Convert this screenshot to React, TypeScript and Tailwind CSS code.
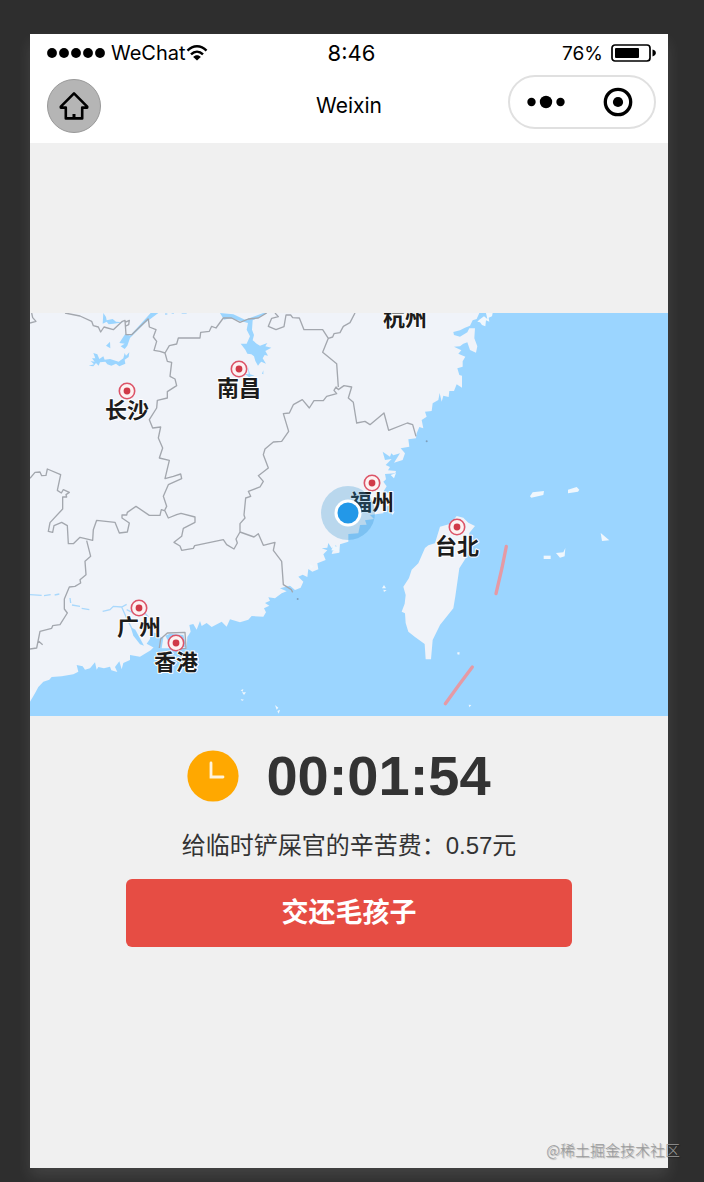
interface City {
  name: string
  x: number
  y: number
  pin?: boolean
}

const cities: City[] = [
  { name: '长沙', x: 97, y: 78, pin: true },
  { name: '南昌', x: 209, y: 56, pin: true },
  { name: '杭州', x: 375, y: -14 },
  { name: '福州', x: 342, y: 170, pin: true },
  { name: '台北', x: 427, y: 214, pin: true },
  { name: '广州', x: 109, y: 295, pin: true },
  { name: '香港', x: 146, y: 330, pin: true },
]

// Outlines are drawn on a 1914 x 1209 grid, three units per map pixel
const mainland =
  '0,0 1348,0 1340,18 1328,22 1320,38 1305,44 1290,52 1270,57 1272,66 1290,71 1312,58 1318,46 1335,46 1333,76 1342,100 1338,119 1320,111 1312,88 1300,92 1290,100 1272,101 1294,112 1285,122 1306,131 1298,145 1298,161 1282,166 1288,186 1296,188 1296,224 1280,214 1272,234 1258,234 1256,252 1240,248 1235,266 1229,240 1225,261 1208,271 1205,294 1185,296 1190,311 1175,321 1180,346 1168,342 1160,361 1158,376 1135,379 1138,401 1112,406 1125,421 1118,441 1092,449 1110,421 1090,427 1084,421 1080,431 1058,416 1065,441 1085,438 1067,456 1080,462 1074,472 1098,474 1096,481 1065,483 1068,499 1060,506 1070,520 1060,536 1088,544 1072,558 1085,576 1064,582 1060,601 1020,606 1032,618 1005,622 1010,635 990,636 985,661 955,663 955,686 930,694 928,719 905,723 908,714 922,708 918,697 905,706 895,690 892,704 875,706 892,712 880,724 887,741 862,751 865,769 847,776 835,768 832,792 818,785 805,791 820,806 812,824 795,831 780,818 750,826 770,835 755,841 735,856 715,853 720,863 705,870 718,878 702,886 708,898 700,911 665,909 655,920 630,928 600,919 590,941 575,926 545,942 530,930 515,939 510,924 500,950 490,933 478,936 482,956 472,972 470,1006 395,1006 400,975 385,968 370,971 374,1000 362,1012 330,1031 300,1026 300,1041 280,1050 275,1069 268,1045 255,1062 262,1077 244,1072 240,1061 222,1066 205,1062 200,1070 195,1048 180,1066 165,1070 158,1060 140,1056 145,1076 130,1084 95,1090 65,1092 58,1100 40,1106 25,1122 15,1141 0,1166'

const taiwan =
  '1187,1039 1203,1039 1208,981 1230,936 1270,886 1276,850 1288,766 1310,731 1318,660 1335,639 1315,629 1300,614 1280,609 1262,632 1230,641 1215,691 1195,697 1185,705 1165,751 1145,770 1137,795 1120,821 1127,846 1124,872 1115,896 1125,901 1127,930 1135,956 1155,972 1184,993'

const borders = [
  'M5,0 L8,14 18,25 0,30',
  'M105,0 L150,9 185,25 190,38 205,42 212,57 222,42 250,50 277,25 285,22 288,65 305,65 355,17 M285,28 L298,22 296,35 285,40',
  'M355,17 L358,42 378,50 370,72 380,85 372,112 390,115 405,120 412,145 425,148 420,190 435,198 440,218 412,236 412,255 382,262 380,285 358,320 368,345 392,342 385,375 398,405 388,435 418,442 405,497 430,490 452,483 455,497 415,515 400,550 410,580 403,594',
  'M405,120 L418,98 440,93 445,75 510,75 512,58 538,55 545,40 558,45 580,15 605,15 630,28 655,18 685,15 710,0',
  'M735,0 L745,11 725,16 715,40 738,50 762,41 768,6 782,6 788,14 808,15 822,50 878,50 895,76 878,118 920,152 925,222',
  'M895,76 L908,72 912,62 930,59 940,40 960,29 975,0',
  'M1158,370 L1148,335 1132,330 1076,352 1062,300 1020,335 1005,325 980,330 970,268 955,255 965,222 942,218 925,230 918,222 912,232 920,242 890,250 880,263 852,263 838,285 817,260 790,275 778,300 760,302 776,355 755,385 730,387 705,408 700,425 715,465 685,488 700,505 690,522 655,535 662,550 647,555 642,606 645,615 630,632 630,657',
  'M0,496 L15,478 30,477 35,488 48,487 52,468 92,485 82,532 94,540 100,530 118,538 108,545 110,552 98,552 98,588 60,629 55,655 68,658 72,638 95,628 112,638 115,692 130,692 150,673 188,682 190,650 200,622 255,628 268,660 292,657 298,630 276,615 276,606 290,606 292,598 318,580 358,607 390,607 394,590 405,594 415,615 440,605 453,601 495,612 495,628 460,646 455,670 432,688 450,699 455,712 490,706 494,698 580,680 590,695 612,708 622,690 618,678 630,657 672,672 685,662 700,697 735,688 730,712 755,745 760,815 784,830 788,838',
  'M170,683 L182,730 165,745 168,785 150,800 152,810 135,820 118,822 103,858 103,888 112,900 90,935 68,938 65,946 30,955 20,1005 0,1008 M26,985 L38,995',
  'M388,1005 L392,978 412,960 465,958 468,1006 440,1008',
]

const lakes = [
  'M362,0 L385,0 345,30 300,75 292,98 284,108 272,100 284,92 268,90 286,62 300,68Z',
  'M220,0 L228,12 230,22 248,18 258,26 280,28 250,32 236,34 230,26 218,32Z',
  'M228,98 L240,86 241,106Z',
  'M176,158 L192,154 182,144 194,146 186,136 196,136 190,120 202,124 208,138 220,130 224,140 240,138 266,146 280,136 284,120 288,128 298,118 296,132 284,140 286,152 268,160 258,152 244,158 232,154 226,146 210,148 206,158 198,150 190,160Z',
  'M570,0 L610,4 645,20 700,0 712,0 668,22 666,50 672,66 668,82 680,92 690,98 702,94 712,90 706,100 724,104 706,114 714,128 704,126 698,136 708,152 694,146 690,150 684,158 676,144 672,130 664,124 652,122 646,110 632,92 650,92 660,70 650,50 654,30 600,16 582,20Z',
  'M642,182 L656,184 654,162 660,184 674,188 660,190 672,206 652,188Z M696,182 L700,172 700,184Z',
  'M302,942 L316,950 342,998 330,994 310,968Z',
  'M362,955 L388,965 396,1000 372,1004 350,992 360,978Z M406,968 L420,962 460,966 470,1004 440,1000 415,985Z',
]

const islets = [
  'M1348,20 L1362,10 1372,18 1368,0 1388,0 1386,10 1376,14 1378,26 1368,22 1366,40 1356,36 1350,28 1342,26Z',
  'M1500,550 L1508,538 1542,534 1540,546 1504,554Z',
  'M1614,530 L1640,522 1648,530 1644,536 1614,541Z',
  'M1541,728 L1562,728 1562,738 1541,738Z',
  'M1578,720 L1600,718 1606,705 1604,730 1590,734Z',
  'M1712,660 L1738,682 1716,684Z',
  'M1062,816 L1068,826 1056,826Z M1060,830 L1070,832 1062,837Z',
  'M910,698 L925,702 928,716 904,712Z M838,754 L850,760 842,768Z',
  'M1082,486 L1098,480 1092,496Z M1084,600 L1094,594 1088,606Z',
  'M636,1138 L648,1138 642,1146Z M632,1158 L642,1160 636,1164Z M735,1176 L745,1184 740,1190Z M742,1194 L750,1190 746,1202Z',
  'M1282,1018 L1289,1018 1288,1025 1282,1024Z M1316,1175 L1324,1176 1318,1183Z',
  'M632,1132 L640,1128 638,1136Z M0,1120 L8,1140 0,1160Z',
]

const sans = 'font-["Inter","Noto_Sans_CJK_SC",sans-serif]'

function CityMap() {
  return (
    <div className="h-[403px] w-full shrink-0 overflow-hidden bg-[#9bd5ff]">
      <svg
        viewBox="0 0 638 403"
        preserveAspectRatio="xMidYMid slice"
        className="block h-full w-full"
        role="img"
        aria-label="地图"
      >
        <g transform="scale(0.33333)">
          <polygon points={mainland} fill="#f0f3f9" />
          <polygon points={taiwan} fill="#f0f3f9" strokeLinejoin="round" />
          {lakes.map((d) => (
            <path key={d} d={d} fill="#9bd5ff" />
          ))}
          <path
            d="M0,845 L35,847 M42,848 L62,845 M74,846 L88,843 M120,855 L122,870 M126,876 L150,880 M155,886 L178,890 M218,895 L240,890 250,880 275,882 290,874 M275,882 L292,920 305,945 M290,890 L320,905 M340,895 L355,912"
            fill="none"
            stroke="#a9d8fc"
            strokeWidth="4"
          />
          <path
            d="M425,0 H432 M455,0 H470 M405,3 H412"
            fill="none"
            stroke="#a9d8fc"
            strokeWidth="5"
          />
          {islets.map((d) => (
            <path key={d} d={d} fill="#f0f7fd" />
          ))}
          <path
            d={borders.join(' ')}
            fill="none"
            stroke="#a3a7ae"
            strokeWidth="4"
            strokeLinejoin="round"
          />
          <path
            d="M1429,700 L1416,765 1398,842 M1327,1062 L1285,1118 1246,1172"
            fill="none"
            stroke="#e59aa5"
            strokeWidth="10"
            strokeLinecap="round"
          />
          <circle cx="1190" cy="385" r="3" fill="#7f9fbb" />
          <circle cx="803" cy="858" r="3" fill="#7f9fbb" />
        </g>
        {cities.map((city) => (
          <g key={city.name}>
            {city.pin && (
              <>
                <circle cx={city.x} cy={city.y} r="7.7" fill="#fdf2f2" stroke="#dc5468" strokeWidth="1.6" />
                <circle cx={city.x} cy={city.y} r="3.4" fill="#d03a48" />
              </>
            )}
            <text
              x={city.x}
              y={city.y + 27}
              textAnchor="middle"
              stroke="#ffffff"
              strokeWidth="2"
              strokeLinejoin="round"
              paintOrder="stroke"
              className={`${sans} fill-[#1c1c1c] text-[22px] font-bold`}
            >
              {city.name}
            </text>
          </g>
        ))}
        {/* current position */}
        <circle cx="318" cy="200" r="27" fill="#2b8fd0" fillOpacity="0.28" />
        <circle cx="318" cy="200" r="13.5" fill="#ffffff" />
        <circle cx="318" cy="200" r="10.5" fill="#2398e8" />
      </svg>
    </div>
  )
}

function StatusBar() {
  return (
    <div className="grid h-[38px] grid-cols-3 items-center pl-4 pr-[11px] text-black">
      <div className="flex items-center">
        <svg width="60" height="12" viewBox="0 0 60 12">
          {[6, 18, 30, 42, 54].map((cx) => (
            <circle key={cx} cx={cx} cy="6" r="4.9" />
          ))}
        </svg>
        <span className="ml-[5px] text-xl leading-7">WeChat</span>
        <svg width="22" height="16" viewBox="0 0 22 16" fill="none" stroke="#000" strokeWidth="2.4">
          <path d="M1.5,5.6 C7,-0.2 15,-0.2 20.5,5.6" />
          <path d="M5,9.4 C8.6,5.8 13.4,5.8 17,9.4" />
          <path d="M11,15.6 L7.2,12 C9.2,9.8 12.8,9.8 14.8,12Z" fill="#000" stroke="none" />
        </svg>
      </div>
      <span className="text-center text-[22px] leading-7">8:46</span>
      <div className="flex items-center justify-end">
        <span className="mt-0.5 text-[19px] leading-7">76%</span>
        <svg className="ml-2" width="46" height="18" viewBox="0 0 46 18">
          <rect x="1" y="1" width="38" height="16" rx="3" fill="none" stroke="#000" strokeWidth="1.7" />
          <rect x="4" y="4" width="24" height="10" rx="1" />
          <path d="M41.5,5.6 C46,6.4 46,11.6 41.5,12.4Z" />
        </svg>
      </div>
    </div>
  )
}

function NavBar() {
  return (
    <div className="grid h-[71px] grid-cols-3 items-center px-3 pb-1">
      <button
        aria-label="首页"
        className="ml-[5px] flex h-[54px] w-[54px] items-center justify-center rounded-full border border-[#999999] bg-[#b5b5b5]"
      >
        <svg width="30" height="28" viewBox="0 0 30 28" fill="none" stroke="#000" strokeWidth="2.6" strokeLinejoin="round" strokeLinecap="round">
          <path d="M15,1.4 L1.8,14.6 V15.6 H6.8 V26.4 H23.2 V15.6 H28.2 V14.6Z" />
          <path d="M15,22 V26" strokeLinecap="butt" strokeWidth="3" />
        </svg>
      </button>
      <h1 className="text-center text-[21px] text-black">Weixin</h1>
      <div className="mb-2 flex h-[54px] w-[148px] items-center justify-self-end rounded-full border-2 border-[#e0e0e0]">
        <button aria-label="更多" className="flex flex-1 justify-center">
          <svg width="38" height="14" viewBox="0 0 38 14">
            <circle cx="4.5" cy="7" r="4.2" />
            <circle cx="19" cy="7" r="6.2" />
            <circle cx="33.5" cy="7" r="4.2" />
          </svg>
        </button>
        <button aria-label="关闭" className="flex flex-1 justify-center">
          <svg width="30" height="30" viewBox="0 0 30 30">
            <circle cx="15" cy="15" r="12.7" fill="none" stroke="#000" strokeWidth="3.3" />
            <circle cx="15" cy="15" r="5.1" />
          </svg>
        </button>
      </div>
    </div>
  )
}

export default function App() {
  return (
    <div className={`${sans} relative flex min-h-screen flex-col bg-[#2e2e2e] pb-[14px] pl-[30px] pr-9 pt-[34px]`}>
      <div className="flex flex-1 flex-col bg-[#f0f0f0] shadow-[0_8px_14px_rgba(255,255,255,0.10)]">
        <header className="bg-white">
          <StatusBar />
          <NavBar />
        </header>

        <main className="flex flex-col pt-[170px]">
          <CityMap />

          <div className="flex flex-col items-center pt-7 text-[#333333]">
            <div className="flex h-16 items-center pr-5">
              <svg width="52" height="52" viewBox="0 0 52 52">
                <circle cx="26" cy="26" r="25.6" fill="#ffa800" />
                <path d="M24,13 V27 H36" fill="none" stroke="#fff4dc" strokeWidth="2.8" strokeLinecap="round" />
              </svg>
              <span className='ml-[27px] font-["Liberation_Sans",sans-serif] text-[56px] font-bold leading-none'>
                00:01:54
              </span>
            </div>
            <p className='mt-5 font-["Liberation_Sans","Noto_Sans_CJK_SC",sans-serif] text-2xl leading-9'>
              给临时铲屎官的辛苦费：0.57元
            </p>
            <button className="mt-[15px] h-[68px] w-[70%] rounded-md bg-[#e64d44] text-[27px] font-bold text-white">
              交还毛孩子
            </button>
          </div>
        </main>
      </div>

      <span className='absolute bottom-5 right-6 font-["Noto_Sans_CJK_SC",sans-serif] text-[15px] font-light leading-6 text-[#999999] [text-shadow:1px_1px_1px_rgba(0,0,0,0.3)]'>
        @稀土掘金技术社区
      </span>
    </div>
  )
}
